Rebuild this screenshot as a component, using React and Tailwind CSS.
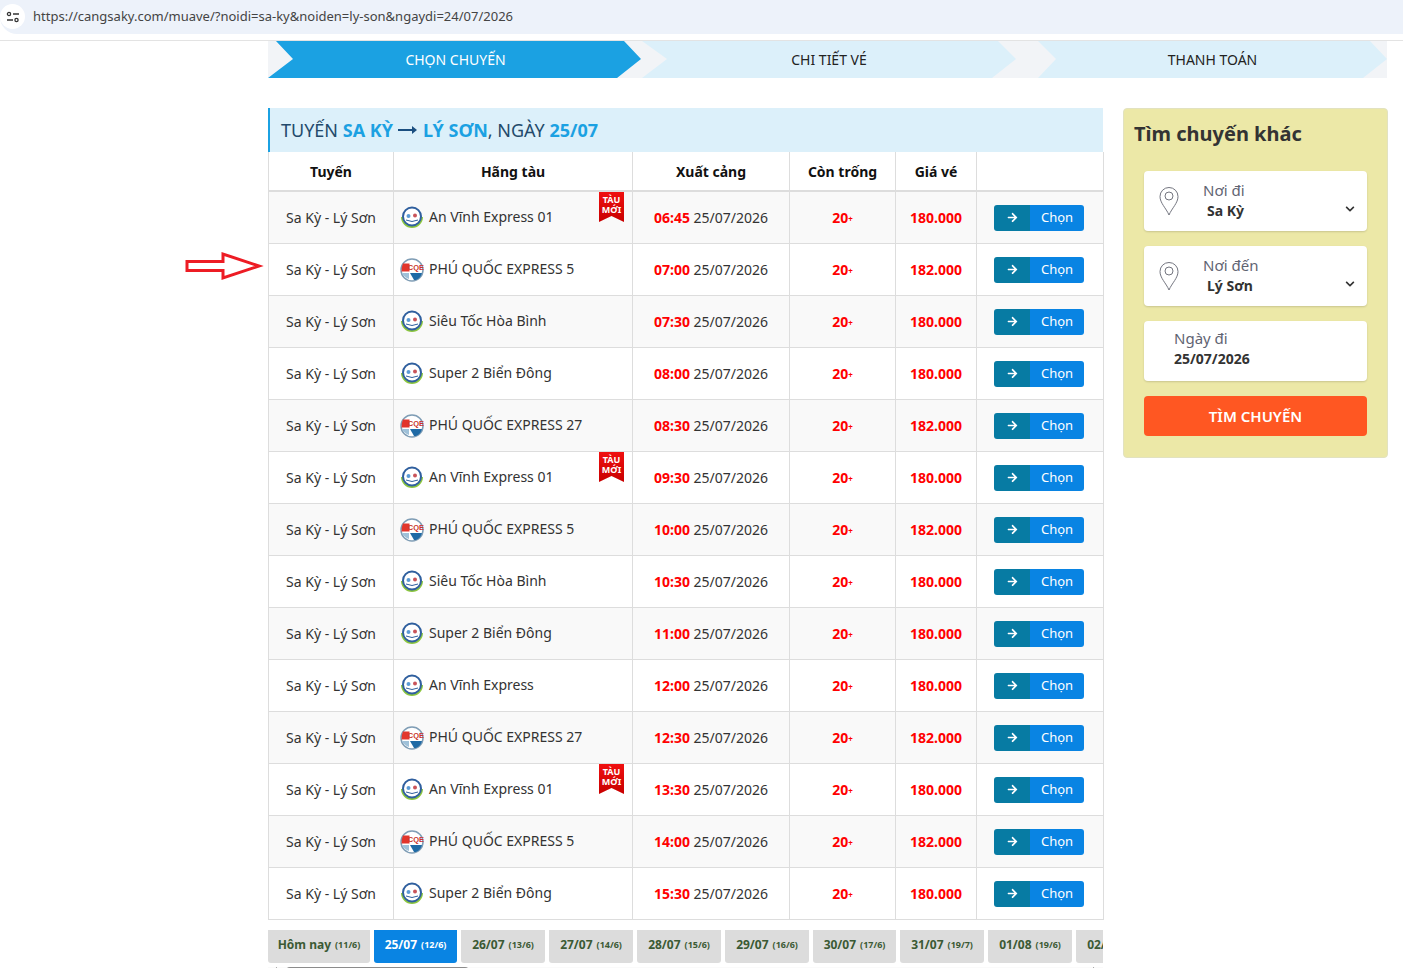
import React from "react";
import { FaArrowRight, FaChevronDown } from "react-icons/fa";

const AN = "an";
const PQ = "pq";

const trips = [
  { name: "An Vĩnh Express 01", time: "06:45", price: "180.000", logo: AN, isNew: true },
  { name: "PHÚ QUỐC EXPRESS 5", time: "07:00", price: "182.000", logo: PQ },
  { name: "Siêu Tốc Hòa Bình", time: "07:30", price: "180.000", logo: AN },
  { name: "Super 2 Biển Đông", time: "08:00", price: "180.000", logo: AN },
  { name: "PHÚ QUỐC EXPRESS 27", time: "08:30", price: "182.000", logo: PQ },
  { name: "An Vĩnh Express 01", time: "09:30", price: "180.000", logo: AN, isNew: true },
  { name: "PHÚ QUỐC EXPRESS 5", time: "10:00", price: "182.000", logo: PQ },
  { name: "Siêu Tốc Hòa Bình", time: "10:30", price: "180.000", logo: AN },
  { name: "Super 2 Biển Đông", time: "11:00", price: "180.000", logo: AN },
  { name: "An Vĩnh Express", time: "12:00", price: "180.000", logo: AN },
  { name: "PHÚ QUỐC EXPRESS 27", time: "12:30", price: "182.000", logo: PQ },
  { name: "An Vĩnh Express 01", time: "13:30", price: "180.000", logo: AN, isNew: true },
  { name: "PHÚ QUỐC EXPRESS 5", time: "14:00", price: "182.000", logo: PQ },
  { name: "Super 2 Biển Đông", time: "15:30", price: "180.000", logo: AN },
];

const days = [
  { label: "Hôm nay", lunar: "(11/6)", width: "w-[102px]" },
  { label: "25/07", lunar: "(12/6)", width: "w-[83px]", active: true },
  { label: "26/07", lunar: "(13/6)", width: "w-[84px]" },
  { label: "27/07", lunar: "(14/6)", width: "w-[84px]" },
  { label: "28/07", lunar: "(15/6)", width: "w-[84px]" },
  { label: "29/07", lunar: "(16/6)", width: "w-[84px]" },
  { label: "30/07", lunar: "(17/6)", width: "w-[83px]" },
  { label: "31/07", lunar: "(19/7)", width: "w-[84px]" },
  { label: "01/08", lunar: "(19/6)", width: "w-[84px]" },
  { label: "02/08", lunar: "(20/6)", width: "w-[84px]" },
];

const AnLogo = () => (
  <svg width="24" height="24" viewBox="0 0 24 24" className="shrink-0">
    <path d="M1 11a11 11 0 0 0 22 0l-2 0a9 9 0 0 1-18 0z" fill="#8cc63f" />
    <circle cx="12" cy="10.5" r="9" fill="#fff" stroke="#2f5f9e" strokeWidth="2" />
    <circle cx="8.5" cy="10" r="2" fill="#5b9bd5" />
    <circle cx="15" cy="9.5" r="2" fill="#c9545a" />
    <path d="M6 14q6 3 12 0" fill="none" stroke="#2f5f9e" strokeWidth="1" />
  </svg>
);

const PqLogo = () => (
  <svg width="24" height="24" viewBox="0 0 24 24" className="shrink-0">
    <circle cx="12" cy="12" r="11" fill="#fff" stroke="#7f9db5" strokeWidth="1.5" />
    <path d="M3 5.5h6.5v8H1.5q0-5 1.5-8z" fill="#e2352c" />
    <path d="M10 15h12q-1 5-6 7h-2z" fill="#1f6aa5" />
    <path d="M2 15h7v6q-5-2-7-6z" fill="#9fc1d9" />
    <text x="16" y="11.5" fontSize="7.5" fontWeight="700" textAnchor="middle" fill="#c8352c" fontFamily="Liberation Sans, sans-serif">CQE</text>
  </svg>
);

const Pin = () => (
  <svg width="20" height="30" viewBox="0 0 20 30" fill="none" stroke="#73757f" strokeWidth="1" className="shrink-0">
    <path d="M10 29 C7 22 1 17 1 10.5 A9 9 0 0 1 19 10.5 C19 17 13 22 10 29z" />
    <circle cx="10" cy="10" r="4" />
  </svg>
);

const Steps = () => (
  <div className="flex h-[37px] w-[1119px] ml-[268px] bg-[#f2f4f7] relative">
    <div className="w-[373px] h-full bg-[#1ba1e2] text-white flex items-center justify-center text-[14px] pl-[2px] [clip-path:polygon(8px_0,356px_0,373px_18px,349px_37px,0_37px,25px_18px)]">
      CHỌN CHUYẾN
    </div>
    <div className="w-[374px] h-full ml-[1px] bg-[#dcf0fa] text-[#222] flex items-center justify-center text-[14px] [clip-path:polygon(0_0,356px_0,374px_18px,350px_37px,0_37px,25px_18px)]">
      CHI TIẾT VÉ
    </div>
    <div className="w-[349px] h-full ml-[22px] bg-[#dcf0fa] text-[#222] flex items-center justify-center text-[14px] [clip-path:polygon(0_0,332px_0,349px_18px,325px_37px,0_37px,18px_18px)]">
      THANH TOÁN
    </div>
  </div>
);

const Ribbon = () => (
  <div className="absolute right-[8px] top-0 w-[25px] h-[30px] bg-gradient-to-b from-[#f01010] to-[#c80000] text-white text-[9px] leading-[10px] font-bold text-center pt-[3px] [clip-path:polygon(0_0,100%_0,100%_100%,50%_80%,0_100%)]">
    TÀU
    <br />
    MỚI
  </div>
);

const Row = ({ trip, index }) => (
  <tr className={`h-[51.55px] border-b border-[#ddd] ${index % 2 === 0 ? "bg-[#f9f9f9]" : "bg-white"}`}>
    <td className="border-x border-[#ddd] text-center">Sa Kỳ - Lý Sơn</td>
    <td className="border-r border-[#ddd] p-0">
      <div className="relative h-[51px] flex items-center pl-[6px] gap-[5px]">
        {trip.logo === AN ? <AnLogo /> : <PqLogo />}
        <span className="-mt-[3px]">{trip.name}</span>
        {trip.isNew && <Ribbon />}
      </div>
    </td>
    <td className="border-r border-[#ddd] text-center">
      <span className="font-bold text-[#f00]">{trip.time}</span> 25/07/2026
    </td>
    <td className="border-r border-[#ddd] text-center font-bold text-[#f00]">
      20<sup className="text-[8px] font-bold -top-[1px]">+</sup>
    </td>
    <td className="border-r border-[#ddd] text-center font-bold text-[#f00]">{trip.price}</td>
    <td className="border-r border-[#ddd] p-0">
      <div className="flex w-[90px] h-[26px] ml-[17px] rounded-[3px] overflow-hidden text-white text-[13px]">
        <span className="w-[36px] bg-[#077ba3] flex items-center justify-center">
          <FaArrowRight className="text-[11px]" />
        </span>
        <span className="flex-1 bg-[#0984e3] flex items-center justify-center">Chọn</span>
      </div>
    </td>
  </tr>
);

const TripTable = () => (
  <table className="w-[835px] table-fixed border-collapse text-[14px] text-[#333]">
    <colgroup>
      <col className="w-[125px]" />
      <col className="w-[239px]" />
      <col className="w-[157px]" />
      <col className="w-[106px]" />
      <col className="w-[81px]" />
      <col className="w-[127px]" />
    </colgroup>
    <thead>
      <tr className="h-[39px] border-b-2 border-[#ddd] text-[#111] bg-white">
        <th className="border-x border-[#ddd] font-bold">Tuyến</th>
        <th className="border-r border-[#ddd] font-bold">Hãng tàu</th>
        <th className="border-r border-[#ddd] font-bold">Xuất cảng</th>
        <th className="border-r border-[#ddd] font-bold">Còn trống</th>
        <th className="border-r border-[#ddd] font-bold">Giá vé</th>
        <th className="border-r border-[#ddd]"></th>
      </tr>
    </thead>
    <tbody>
      {trips.map((trip, i) => (
        <Row key={i} trip={trip} index={i} />
      ))}
    </tbody>
  </table>
);

const DayTabs = () => (
  <div className="flex gap-[4px] mt-[10px] h-[33px] overflow-hidden">
    {days.map((d) => (
      <div
        key={d.label}
        className={`${d.width} shrink-0 rounded-b-[3px] flex items-center justify-center gap-[4px] font-bold text-[12px] pb-[3px] ${
          d.active ? "bg-[#0984e3] text-white" : "bg-[#dcdcdc] text-[#3b5a34]"
        }`}
      >
        {d.label} <span className="text-[9px]">{d.lunar}</span>
      </div>
    ))}
  </div>
);

const ScrollBar = () => (
  <div className="flex items-center h-[8px] mt-[4px] bg-[#fafafa] relative overflow-hidden">
    <span className="ml-[4px] w-0 h-0 border-y-[4px] border-y-transparent border-r-[5px] border-r-[#777]"></span>
    <span className="ml-[9px] w-[183px] h-[8px] rounded-full bg-[#8c8c8c]"></span>
    <span className="ml-auto mr-[5px] w-0 h-0 border-y-[4px] border-y-transparent border-l-[5px] border-l-[#777]"></span>
  </div>
);

const SelectCard = ({ label, value }) => (
  <div className="h-[60px] bg-white rounded-[4px] shadow-[0_1px_2px_rgba(0,0,0,0.15)] flex items-center pl-[15px] pr-[12px]">
    <Pin />
    <div className="ml-[24px] flex-1">
      <div className="text-[15px] leading-[20px] text-[#5f6472]">{label}</div>
      <div className="text-[14px] leading-[22px] font-bold text-[#333] pl-[4px]">{value}</div>
    </div>
    <FaChevronDown className="text-[10px] text-[#333] mt-[15px]" />
  </div>
);

const Sidebar = () => (
  <aside className="w-[265px] h-[350px] bg-[#ece8a7] rounded-[4px] border border-[#e2e2c0] px-[10px] pt-[11px]">
    <h2 className="text-[20px] leading-[28px] font-bold text-[#333]">Tìm chuyến khác</h2>
    <div className="flex flex-col gap-[15px] mt-[23px] ml-[10px] w-[223px]">
      <SelectCard label="Nơi đi" value="Sa Kỳ" />
      <SelectCard label="Nơi đến" value="Lý Sơn" />
      <div className="h-[60px] bg-white rounded-[4px] shadow-[0_1px_2px_rgba(0,0,0,0.15)] pl-[30px] pt-[7px]">
        <div className="text-[15px] leading-[20px] text-[#5f6472]">Ngày đi</div>
        <div className="text-[14px] leading-[22px] font-bold text-[#333]">25/07/2026</div>
      </div>
      <button className="h-[40px] bg-[#ff5722] rounded-[4px] text-white text-[15px] font-semibold">TÌM CHUYẾN</button>
    </div>
  </aside>
);

export default function App() {
  return (
    <div className="relative w-[1403px] h-[968px] overflow-hidden bg-white font-['Noto_Sans',sans-serif]">
      {/* browser address bar */}
      <div className="h-[41px] border-b border-[#e3e3e3]">
        <div className="h-[34px] bg-[#edf2fa] flex items-center rounded-bl-[17px]">
          <div className="w-[25px] h-[25px] rounded-full bg-white flex items-center justify-center -mt-[1px]">
            <svg width="14" height="12" viewBox="0 0 14 12" fill="none" stroke="#333" strokeWidth="1.3">
              <circle cx="3" cy="3" r="1.6" />
              <path d="M7 3h6M1 9h6" />
              <circle cx="10.5" cy="9" r="1.6" />
            </svg>
          </div>
          <span className="ml-[8px] text-[13px] text-[#444] -mt-[1px]">
            https://cangsaky.com/muave/?noidi=sa-ky&amp;noiden=ly-son&amp;ngaydi=24/07/2026
          </span>
        </div>
      </div>

      <Steps />

      <div className="flex gap-[20px] ml-[268px] mt-[30px]">
        <main className="w-[835px]">
          <div className="h-[44px] bg-[#dcf0fa] border-l-[2px] border-[#1ba1e2] pl-[11px] flex items-center text-[18px] text-[#234a6b] gap-[5px] whitespace-pre">
            <span>
              TUYẾN <b className="text-[#1ba1e2]">SA KỲ</b>
            </span>
            <svg width="20" height="10" viewBox="0 0 20 10" className="shrink-0">
              <path d="M0 4h14V1l5 4-5 4V6H0z" fill="#1a4f80" />
            </svg>
            <span>
              <b className="text-[#1ba1e2]">LÝ SƠN</b>, NGÀY <b className="text-[#1ba1e2]">25/07</b>
            </span>
          </div>
          <TripTable />
          <DayTabs />
          <ScrollBar />
        </main>
        <Sidebar />
      </div>

      {/* red annotation arrow */}
      <svg width="80" height="30" viewBox="0 0 80 30" className="absolute left-[184px] top-[251px]" fill="none" stroke="#ed1c24" strokeWidth="3">
        <path d="M3 10.5h36V3l36 12-36 12v-7.5H3z" />
      </svg>
    </div>
  );
}
